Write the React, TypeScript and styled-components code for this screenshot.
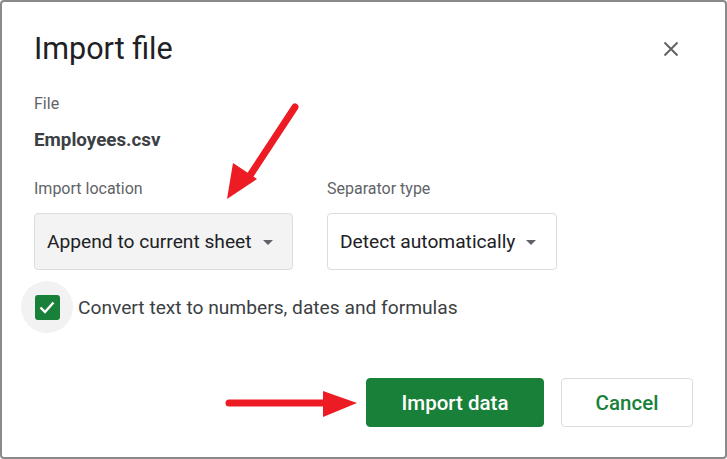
import React from "react";
import styled, { createGlobalStyle } from "styled-components";

const Global = createGlobalStyle`
  html, body { margin: 0; padding: 0; background: #ffffff; }
  body { font-family: Roboto, "Noto Sans", "Liberation Sans", sans-serif; }
  * { box-sizing: border-box; }
`;

const Frame = styled.div`
  position: relative;
  width: 727px;
  height: 459px;
  border: 2px solid #8a8a8a;
  border-radius: 4px;
  background: #ffffff;
  padding: 29px 32px 30px 32px;
  display: flex;
  flex-direction: column;
  overflow: hidden;
`;

const Header = styled.div`
  display: flex;
  align-items: center;
  justify-content: space-between;
  height: 36px;
`;

const Title = styled.h1`
  margin: 0;
  font-family: Roboto, "Noto Sans", sans-serif;
  font-weight: 400;
  font-size: 30.5px;
  line-height: 36px;
  color: #202124;
`;

const CloseButton = styled.button`
  width: 44px;
  height: 44px;
  border: none;
  background: transparent;
  padding: 0;
  display: flex;
  align-items: center;
  justify-content: center;
  cursor: pointer;
`;

const Label = styled.div<{ $mt: number }>`
  margin-top: ${(p) => p.$mt}px;
  font-size: 16px;
  line-height: 20px;
  color: #5f6368;
`;

const FileName = styled.div`
  margin-top: 14px;
  font-size: 18.8px;
  line-height: 24px;
  font-weight: 700;
  color: #3c4043;
`;

const Fields = styled.div`
  display: flex;
  gap: 34px;
  margin-top: 27px;
`;

const Field = styled.div`
  display: flex;
  flex-direction: column;
  gap: 14px;
`;

const FieldLabel = styled.div`
  font-size: 16px;
  line-height: 20px;
  color: #5f6368;
`;

const Select = styled.div<{ $width: number; $filled?: boolean }>`
  width: ${(p) => p.$width}px;
  height: 57px;
  border: 1px solid #dadce0;
  border-radius: 4px;
  background: ${(p) => (p.$filled ? "#f3f3f3" : "#ffffff")};
  display: flex;
  align-items: center;
  padding: 0 12px;
  gap: 11px;
  font-size: 19.2px;
  color: #202124;
`;

const Caret = styled.span`
  width: 0;
  height: 0;
  border-left: 5px solid transparent;
  border-right: 5px solid transparent;
  border-top: 5px solid #5f6368;
  margin-top: 2px;
`;

const CheckRow = styled.div`
  display: flex;
  align-items: center;
  margin-top: 11px;
  margin-left: -13px;
  gap: 5px;
`;

const Ripple = styled.div`
  width: 52px;
  height: 52px;
  border-radius: 50%;
  background: #f2f2f2;
  display: flex;
  align-items: center;
  justify-content: center;
`;

const CheckBox = styled.div`
  width: 25px;
  height: 25px;
  border-radius: 3px;
  background: #188038;
  display: flex;
  align-items: center;
  justify-content: center;
`;

const CheckText = styled.span`
  font-size: 19.2px;
  color: #3c4043;
`;

const Footer = styled.div`
  margin-top: auto;
  display: flex;
  justify-content: flex-end;
  gap: 17px;
`;

const Button = styled.button<{ $primary?: boolean; $width: number }>`
  width: ${(p) => p.$width}px;
  height: 49px;
  border-radius: 4px;
  font-family: Roboto, "Noto Sans", sans-serif;
  font-size: 20.5px;
  font-weight: 500;
  cursor: pointer;
  border: 1px solid ${(p) => (p.$primary ? "#188038" : "#dadce0")};
  background: ${(p) => (p.$primary ? "#188038" : "#ffffff")};
  color: ${(p) => (p.$primary ? "#ffffff" : "#188038")};
`;

const Overlay = styled.svg`
  position: absolute;
  top: -2px;
  left: -2px;
  pointer-events: none;
`;

export default function App() {
  return (
    <>
      <Global />
      <Frame>
        <Header>
          <Title>Import file</Title>
          <CloseButton aria-label="Close">
            <svg width="16" height="16" viewBox="0 0 16 16">
              <path d="M1.5 1.5 L14.5 14.5 M14.5 1.5 L1.5 14.5" stroke="#5f6368" strokeWidth="2" />
            </svg>
          </CloseButton>
        </Header>
        <Label $mt={27}>File</Label>
        <FileName>Employees.csv</FileName>
        <Fields>
          <Field>
            <FieldLabel>Import location</FieldLabel>
            <Select $width={259} $filled>
              <span>Append to current sheet</span>
              <Caret />
            </Select>
          </Field>
          <Field>
            <FieldLabel>Separator type</FieldLabel>
            <Select $width={230}>
              <span>Detect automatically</span>
              <Caret />
            </Select>
          </Field>
        </Fields>
        <CheckRow>
          <Ripple>
            <CheckBox>
              <svg width="20" height="20" viewBox="0 0 20 20">
                <path d="M3.5 10.5 L8 15 L16.5 5.5" fill="none" stroke="#ffffff" strokeWidth="2.4" />
              </svg>
            </CheckBox>
          </Ripple>
          <CheckText>Convert text to numbers, dates and formulas</CheckText>
        </CheckRow>
        <Footer>
          <Button $primary $width={178}>Import data</Button>
          <Button $width={132}>Cancel</Button>
        </Footer>
        <Overlay width="727" height="459" viewBox="0 0 727 459">
          <line x1="295" y1="107" x2="247" y2="180" stroke="#ed1c24" strokeWidth="7" strokeLinecap="round" />
          <polygon points="227,199 233,163 257,179" fill="#ed1c24" />
          <line x1="229" y1="403" x2="326" y2="403" stroke="#ed1c24" strokeWidth="7" strokeLinecap="round" />
          <polygon points="357,403 323,391 323,417" fill="#ed1c24" />
        </Overlay>
      </Frame>
    </>
  );
}
